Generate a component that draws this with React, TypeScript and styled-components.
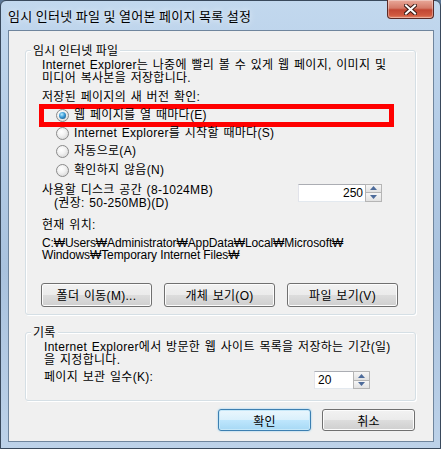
import styled, { createGlobalStyle, css } from "styled-components";

const GlobalStyle = createGlobalStyle`
  html, body {
    margin: 0;
    padding: 0;
    background: #5d7897;
  }
  body {
    font-family: "Liberation Sans", "Noto Sans CJK KR", sans-serif;
    font-size: 12px;
    color: #000;
  }
  * { box-sizing: border-box; }
`;

const Frame = styled.div`
  width: 441px;
  height: 449px;
  display: flex;
  flex-direction: column;
  border: 1px solid #39495c;
  border-radius: 6px 6px 0 0;
  background: linear-gradient(180deg, #c2d8ee 0%, #b4cce6 30%, #a9c2de 60%, #bdd2e9 100%);
  padding: 0 6px 6px 7px;
`;

const TitleBar = styled.div`
  height: 29px;
  display: flex;
  align-items: flex-start;
  justify-content: space-between;
`;

const TitleText = styled.div`
  padding-top: 6px;
  font-family: "Noto Sans CJK KR", sans-serif;
  font-size: 13px;
  line-height: 17px;
  letter-spacing: 0.3px;
  color: #000;
  text-shadow: 0 0 6px rgba(255, 255, 255, 0.9);
`;

const CloseButton = styled.div`
  width: 47px;
  height: 19px;
  margin-top: -1px;
  border: 1px solid #5a2a26;
  border-top: none;
  border-radius: 0 0 4px 4px;
  background: linear-gradient(180deg, #e9a99a 0%, #d47a68 45%, #c24632 55%, #d0593f 85%, #e58a6c 100%);
  box-shadow: inset 0 0 0 1px rgba(255, 255, 255, 0.35);
  display: flex;
  align-items: center;
  justify-content: center;
`;

const Client = styled.div`
  flex: 1;
  border: 1px solid #6f859d;
  background: #f0f0f0;
  display: flex;
  flex-direction: column;
  padding: 19px 17px 0 16px;
`;

const Group = styled.div<{ $height: number; $mt?: number }>`
  position: relative;
  height: ${({ $height }) => $height}px;
  margin-top: ${({ $mt = 0 }) => $mt}px;
  border: 1px solid #d5dfe5;
  border-radius: 3px;
  box-shadow: inset 1px 1px 0 #fff, 1px 1px 0 #fff;
  display: flex;
  flex-direction: column;
`;

const Legend = styled.div`
  position: absolute;
  top: -8px;
  left: 5px;
  padding: 0 2px;
  background: #f0f0f0;
  font-family: "Noto Sans CJK KR", sans-serif;
  font-size: 12px;
  line-height: 14px;
  letter-spacing: 0.3px;
`;

const Text = styled.div<{ $indent?: number; $mt?: number }>`
  font-family: "Liberation Sans", "Noto Sans CJK KR", sans-serif;
  font-size: 12px;
  line-height: 13px;
  letter-spacing: 0.3px;
  word-spacing: 1px;
  white-space: nowrap;
  padding-left: ${({ $indent = 0 }) => $indent}px;
  margin-top: ${({ $mt = 0 }) => $mt}px;
`;

const PathText = styled.div`
  font-family: "Liberation Sans", "Noto Sans CJK KR", sans-serif;
  font-size: 12px;
  line-height: 12.5px;
  letter-spacing: -0.1px;
  white-space: nowrap;
  margin-top: 5px;
`;

const Section = styled.div<{ $pt: number; $pl: number }>`
  padding: ${({ $pt }) => $pt}px 0 0 ${({ $pl }) => $pl}px;
  display: flex;
  flex-direction: column;
`;

const RadioList = styled.div`
  display: flex;
  flex-direction: column;
  margin-left: -3px;
`;

const RadioRow = styled.div<{ $highlight?: boolean }>`
  display: flex;
  align-items: center;
  gap: 5px;
  height: 18.5px;
  padding-left: 17px;
  ${({ $highlight }) =>
    $highlight &&
    css`
      height: 23px;
      width: 355px;
      border: 5px solid #ff0000;
      padding-left: 12px;
      margin-bottom: -3px;
    `}
`;

const RadioCircle = styled.span<{ $checked?: boolean }>`
  width: 13px;
  height: 13px;
  flex: none;
  border-radius: 50%;
  border: 1px solid #8a8a8a;
  background: radial-gradient(circle at 40% 35%, #ffffff 0%, #f2f2f2 40%, #cfcfcf 100%);
  display: flex;
  align-items: center;
  justify-content: center;
  &::after {
    content: "";
    display: ${({ $checked }) => ($checked ? "block" : "none")};
    width: 7px;
    height: 7px;
    border-radius: 50%;
    background: radial-gradient(circle at 40% 35%, #b8ecff 0%, #3a9ad6 45%, #12456f 100%);
  }
`;

const FieldRow = styled.div<{ $mt: number; $pr: number }>`
  display: flex;
  justify-content: space-between;
  align-items: flex-start;
  margin-top: ${({ $mt }) => $mt}px;
  padding-right: ${({ $pr }) => $pr}px;
`;

const SpinBox = styled.div<{ $width: number }>`
  width: ${({ $width }) => $width}px;
  height: 18px;
  display: flex;
  border: 1px solid #abadb3;
  border-right-color: #dbdfe6;
  border-bottom-color: #e3e9ef;
  border-left-color: #e2e3ea;
  background: #fff;
`;

const SpinValue = styled.div<{ $align: "left" | "right" }>`
  flex: 1;
  font-family: "Liberation Sans", sans-serif;
  font-size: 12px;
  line-height: 16px;
  text-align: ${({ $align }) => $align};
  padding: 0 2px 0 3px;
`;

const SpinButtons = styled.div`
  width: 17px;
  display: flex;
  flex-direction: column;
  border: 1px solid #b5b5b5;
  margin: -1px -1px -1px 0;
`;

const SpinHalf = styled.div`
  flex: 1;
  display: flex;
  align-items: center;
  justify-content: center;
  background: linear-gradient(180deg, #f6f6f6 0%, #e2e2e2 100%);
  & + & {
    border-top: 1px solid #b5b5b5;
  }
`;

const ButtonRow = styled.div<{ $pl: number; $mt: number; $gap: number }>`
  display: flex;
  gap: ${({ $gap }) => $gap}px;
  padding-left: ${({ $pl }) => $pl}px;
  margin-top: ${({ $mt }) => $mt}px;
`;

const Button = styled.div<{ $width: number; $height: number; $default?: boolean }>`
  width: ${({ $width }) => $width}px;
  height: ${({ $height }) => $height}px;
  border: 1px solid #707070;
  border-radius: 3px;
  background: linear-gradient(180deg, #f2f2f2 0%, #ebebeb 49%, #dddddd 50%, #cfcfcf 100%);
  box-shadow: inset 0 0 0 1px #fcfcfc;
  display: flex;
  align-items: center;
  justify-content: center;
  font-family: "Liberation Sans", "Noto Sans CJK KR", sans-serif;
  font-size: 12px;
  letter-spacing: 0.3px;
  word-spacing: 1px;
  ${({ $default }) =>
    $default &&
    css`
      border-color: #3c7fb1;
      background: linear-gradient(180deg, #eaf6fd 0%, #d9f0fc 49%, #bee6fd 50%, #a7d9f5 100%);
      box-shadow: inset 0 0 0 1px #c6e8f9, 0 0 2px #7fc7ee;
    `}
`;

const Footer = styled.div`
  display: flex;
  justify-content: flex-end;
  gap: 11px;
  margin-top: 8px;
  padding-right: 1px;
`;

function Arrow({ up }: { up?: boolean }) {
  return (
    <svg width="7" height="4" viewBox="0 0 7 4">
      <path d={up ? "M3.5 0 L7 4 L0 4 Z" : "M0 0 L7 0 L3.5 4 Z"} fill="#4d6b9a" />
    </svg>
  );
}

function Spin({ value, width, align }: { value: string; width: number; align: "left" | "right" }) {
  return (
    <SpinBox $width={width}>
      <SpinValue $align={align}>{value}</SpinValue>
      <SpinButtons>
        <SpinHalf>
          <Arrow up />
        </SpinHalf>
        <SpinHalf>
          <Arrow />
        </SpinHalf>
      </SpinButtons>
    </SpinBox>
  );
}

const radios = [
  { label: "웹 페이지를 열 때마다(E)", checked: true },
  { label: "Internet Explorer를 시작할 때마다(S)" },
  { label: "자동으로(A)" },
  { label: "확인하지 않음(N)" },
];

export default function App() {
  return (
    <>
      <GlobalStyle />
      <Frame>
        <TitleBar>
          <TitleText>임시 인터넷 파일 및 열어본 페이지 목록 설정</TitleText>
          <CloseButton>
            <svg width="13" height="11" viewBox="0 0 13 11">
              <path d="M2 1.5 L11 9.5 M11 1.5 L2 9.5" stroke="#3a1a14" strokeWidth="4" strokeLinecap="square" />
              <path d="M2 1.5 L11 9.5 M11 1.5 L2 9.5" stroke="#ffffff" strokeWidth="2" strokeLinecap="square" />
            </svg>
          </CloseButton>
        </TitleBar>
        <Client>
          <Group $height={265}>
            <Legend>임시 인터넷 파일</Legend>
            <Section $pt={8} $pl={16}>
              <Text>Internet Explorer는 나중에 빨리 볼 수 있게 웹 페이지, 이미지 및</Text>
              <Text>미디어 복사본을 저장합니다.</Text>
              <Text $mt={6}>저장된 페이지의 새 버전 확인:</Text>
              <RadioList>
                {radios.map((r) => (
                  <RadioRow key={r.label} $highlight={r.checked}>
                    <RadioCircle $checked={r.checked} />
                    <Text>{r.label}</Text>
                  </RadioRow>
                ))}
              </RadioList>
              <FieldRow $mt={4} $pr={33}>
                <div>
                  <Text>사용할 디스크 공간 (8-1024MB)</Text>
                  <Text $indent={12}>(권장: 50-250MB)(D)</Text>
                </div>
                <Spin value="250" width={84} align="right" />
              </FieldRow>
              <Text $mt={9}>현재 위치:</Text>
              <PathText>
                C:₩Users₩Administrator₩AppData₩Local₩Microsoft₩
                <br />
                Windows₩Temporary Internet Files₩
              </PathText>
            </Section>
            <ButtonRow $pl={15} $mt={21} $gap={12}>
              <Button $width={111} $height={24}>폴더 이동(M)...</Button>
              <Button $width={111} $height={24}>개체 보기(O)</Button>
              <Button $width={111} $height={24}>파일 보기(V)</Button>
            </ButtonRow>
          </Group>
          <Group $height={69} $mt={17}>
            <Legend>기록</Legend>
            <Section $pt={8} $pl={18}>
              <Text>Internet Explorer에서 방문한 웹 사이트 목록을 저장하는 기간(일)</Text>
              <Text>을 지정합니다.</Text>
              <FieldRow $mt={4} $pr={45}>
                <Text>페이지 보관 일수(K):</Text>
                <Spin value="20" width={56} align="left" />
              </FieldRow>
            </Section>
          </Group>
          <Footer>
            <Button $width={93} $height={22} $default>확인</Button>
            <Button $width={93} $height={22}>취소</Button>
          </Footer>
        </Client>
      </Frame>
    </>
  );
}
